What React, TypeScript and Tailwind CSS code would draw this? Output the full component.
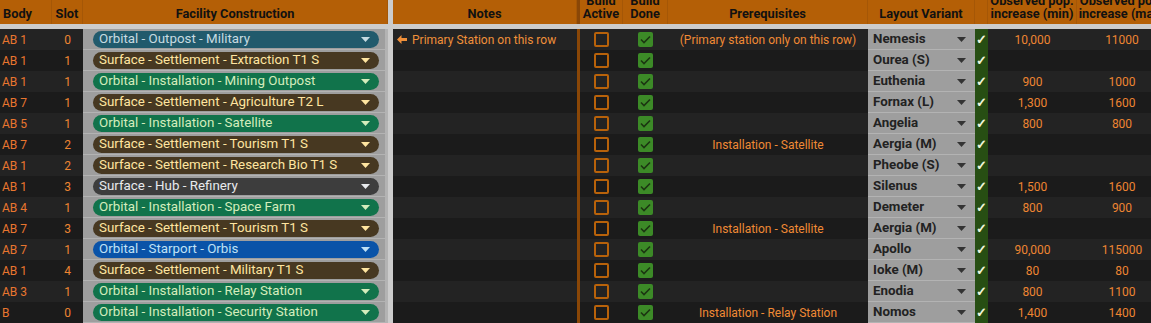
import React from "react";

type Chip = "teal" | "brown" | "green" | "gray" | "blue";

interface Row {
  body: string;
  slot: string;
  facility: string;
  chip: Chip;
  note?: string;
  prereq?: string;
  layout: string;
  min?: string;
  max?: string;
}

const chipStyles: Record<Chip, { box: string; tri: string }> = {
  teal: { box: "bg-[#215a6c] text-[#c6dbe1]", tri: "#c6dbe1" },
  brown: { box: "bg-[#473821] text-[#ffe5a0]", tri: "#ffe5a0" },
  green: { box: "bg-[#11734b] text-[#d4edbc]", tri: "#d4edbc" },
  gray: { box: "bg-[#3d3d3d] text-[#e8eaed]", tri: "#e8eaed" },
  blue: { box: "bg-[#0a53a8] text-[#bfe1f6]", tri: "#bfe1f6" },
};

const rows: Row[] = [
  { body: "AB 1", slot: "0", facility: "Orbital - Outpost - Military", chip: "teal", note: "Primary Station on this row", prereq: "(Primary station only on this row)", layout: "Nemesis", min: "10,000", max: "11000" },
  { body: "AB 1", slot: "1", facility: "Surface - Settlement - Extraction T1 S", chip: "brown", layout: "Ourea (S)" },
  { body: "AB 1", slot: "1", facility: "Orbital - Installation - Mining Outpost", chip: "green", layout: "Euthenia", min: "900", max: "1000" },
  { body: "AB 7", slot: "1", facility: "Surface - Settlement - Agriculture T2 L", chip: "brown", layout: "Fornax (L)", min: "1,300", max: "1600" },
  { body: "AB 5", slot: "1", facility: "Orbital - Installation - Satellite", chip: "green", layout: "Angelia", min: "800", max: "800" },
  { body: "AB 7", slot: "2", facility: "Surface - Settlement - Tourism T1 S", chip: "brown", prereq: "Installation - Satellite", layout: "Aergia (M)" },
  { body: "AB 1", slot: "2", facility: "Surface - Settlement - Research Bio T1 S", chip: "brown", layout: "Pheobe (S)" },
  { body: "AB 1", slot: "3", facility: "Surface - Hub - Refinery", chip: "gray", layout: "Silenus", min: "1,500", max: "1600" },
  { body: "AB 4", slot: "1", facility: "Orbital - Installation - Space Farm", chip: "green", layout: "Demeter", min: "800", max: "900" },
  { body: "AB 7", slot: "3", facility: "Surface - Settlement - Tourism T1 S", chip: "brown", prereq: "Installation - Satellite", layout: "Aergia (M)" },
  { body: "AB 7", slot: "1", facility: "Orbital - Starport - Orbis", chip: "blue", layout: "Apollo", min: "90,000", max: "115000" },
  { body: "AB 1", slot: "4", facility: "Surface - Settlement - Military T1 S", chip: "brown", layout: "Ioke (M)", min: "80", max: "80" },
  { body: "AB 3", slot: "1", facility: "Orbital - Installation - Relay Station", chip: "green", layout: "Enodia", min: "800", max: "1100" },
  { body: "B", slot: "0", facility: "Orbital - Installation - Security Station", chip: "green", prereq: "Installation - Relay Station", layout: "Nomos", min: "1,400", max: "1400" },
];

const cols = "grid grid-cols-[52px_31px_305px_5px_184px_46px_45px_200px_107px_13px_89px_90px]";

function Triangle({ color }: { color: string }) {
  return (
    <svg width="9" height="5" viewBox="0 0 9 5" className="shrink-0">
      <path d="M0 0 L9 0 L4.5 5 Z" fill={color} />
    </svg>
  );
}

function Head({ children, className = "" }: { children?: React.ReactNode; className?: string }) {
  return (
    <div className={`flex h-[24px] items-end overflow-hidden whitespace-nowrap border-r border-[#a55706] pb-[4px] text-[12.8px] font-bold leading-[13px] text-[#111] ${className}`}>
      {children}
    </div>
  );
}

export default function App() {
  return (
    <div className="h-[323px] w-[1151px] overflow-hidden bg-[#1b1b1b] font-['Roboto',sans-serif]">
      {/* header */}
      <div className={`${cols} bg-[#b45f06]`}>
        <Head className="pl-[3px]">Body</Head>
        <Head className="justify-center">Slot</Head>
        <Head className="justify-center">Facility Construction</Head>
        <div className="bg-[#cccccc]" />
        <Head className="justify-center">Notes</Head>
        <Head className="justify-center border-l-[3px] border-l-[#8a4707] text-center">
          Build
          <br />
          Active
        </Head>
        <Head className="justify-center text-center">
          Build
          <br />
          Done
        </Head>
        <Head className="justify-center">Prerequisites</Head>
        <Head className="justify-center">Layout Variant</Head>
        <Head />
        <Head className="justify-center text-center">
          Observed pop.
          <br />
          increase (min)
        </Head>
        <Head className="justify-center text-center">
          Observed pop.
          <br />
          increase (max)
        </Head>
      </div>
      <div className="h-[5px] bg-[#cccccc]" />

      {/* rows */}
      {rows.map((r, i) => {
        const bg = i % 2 === 0 ? "bg-[#232323]" : "bg-[#1b1b1b]";
        const chip = chipStyles[r.chip];
        return (
          <div key={i} className={`${cols} h-[21px] grid-rows-[21px] overflow-hidden whitespace-nowrap text-[12px] leading-none text-[#ee8532] ${bg}`}>
            <div className="flex items-center pl-[2px] text-[#e9762f]">{r.body}</div>
            <div className="flex items-center justify-center">{r.slot}</div>
            <div className="flex items-center border-b border-r-[3px] border-[#b3b3b3] bg-[#9e9e9e] pl-[10px] pr-[6px] text-[13.33px]">
              <div className={`flex h-[17px] w-full items-center justify-between rounded-full pl-[6px] pr-[9px] ${chip.box}`}>
                <span>{r.facility}</span>
                <Triangle color={chip.tri} />
              </div>
            </div>
            <div className="bg-[#cccccc]" />
            <div className="flex items-center gap-[5px] pl-[4px] text-[#f0903a]">
              {r.note && (
                <>
                  <svg width="10" height="9" viewBox="0 0 10 9" className="shrink-0">
                    <path d="M0 4.5 L4.5 0 L4.5 3 L10 3 L10 6 L4.5 6 L4.5 9 Z" fill="#f0903a" />
                  </svg>
                  <span>{r.note}</span>
                </>
              )}
            </div>
            <div className="flex items-center justify-center border-l-[3px] border-[#8a4707]">
              <div className="h-[15px] w-[15px] rounded-[2px] border-2 border-[#b8620a]" />
            </div>
            <div className="flex items-center justify-center">
              <div className="flex h-[15px] w-[15px] items-center justify-center rounded-[2px] bg-[#3c8a27]">
                <svg width="11" height="9" viewBox="0 0 11 9">
                  <path d="M1 4.5 L4 7.5 L10 1.5" fill="none" stroke="#1c3512" strokeWidth="1.6" />
                </svg>
              </div>
            </div>
            <div className="flex items-center justify-center text-[#f08a35]">{r.prereq}</div>
            <div className="flex items-center justify-between border-b border-[#b3b3b3] bg-[#9e9e9e] pl-[5px] pr-[9px] text-[13.33px] font-bold text-[#222]">
              <span>{r.layout}</span>
              <Triangle color="#333333" />
            </div>
            <div className="flex items-center justify-center bg-[#274e13] text-[13px] font-bold text-[#eef5dc]">✓</div>
            <div className="flex items-center justify-center">{r.min}</div>
            <div className="flex items-center justify-center">{r.max}</div>
          </div>
        );
      })}
    </div>
  );
}
